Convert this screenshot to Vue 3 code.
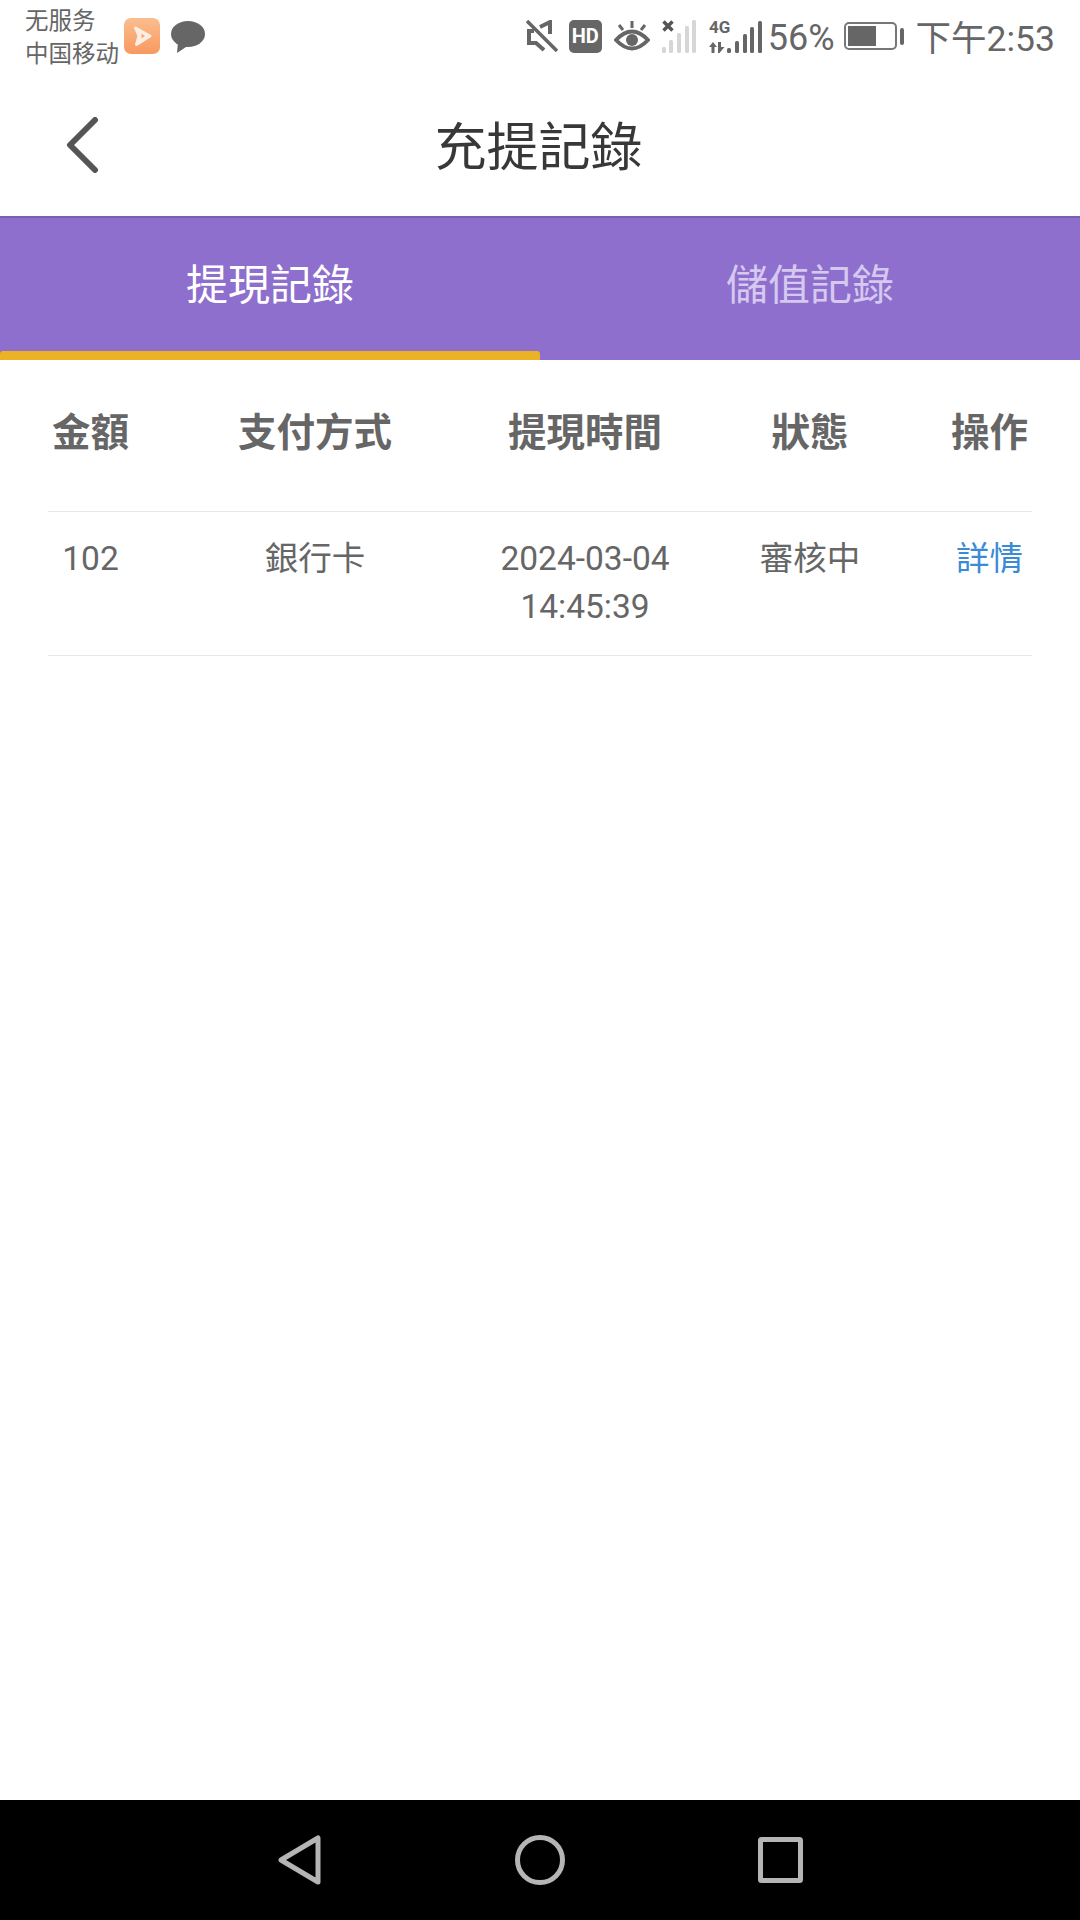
<template>
  <div class="page">
    <div class="status-bar">
      <div class="carrier">
        <span>无服务</span>
        <span>中国移动</span>
      </div>
      <svg class="app-icon" width="36" height="36" viewBox="0 0 36 36">
        <defs>
          <linearGradient id="appGrad" x1="0" y1="0" x2="0" y2="1">
            <stop offset="0" stop-color="#fbbd8e" />
            <stop offset="1" stop-color="#f8995f" />
          </linearGradient>
        </defs>
        <rect width="36" height="36" rx="7" fill="url(#appGrad)" />
        <path d="M11.5 10 L26 18 L12.5 26.5 L15 18 Z" fill="#fdeee3" stroke="#fdeee3" stroke-width="3" stroke-linejoin="round" />
        <path d="M17.5 15.5 L21 18 L17.5 20.5 Z" fill="#f9a873" />
      </svg>
      <svg class="bubble" width="34" height="32" viewBox="0 0 34 32">
        <ellipse cx="17" cy="13" rx="17" ry="13" fill="#666" />
        <path d="M7 21 L6 32 L18 24 Z" fill="#666" />
      </svg>

      <div class="status-right">
        <svg width="32" height="32" viewBox="0 0 32 32" fill="none" stroke="#666" stroke-width="4">
          <path d="M1 1 L31 31" stroke-width="3.5" />
          <path d="M8 11 H3 V23 H10 L18 30 M14 7 L24 2 V14" />
        </svg>
        <div class="hd">HD</div>
        <svg width="36" height="30" viewBox="0 0 36 30" fill="none" stroke="#666">
          <path d="M2 19 Q18 2 34 19 Q18 36 2 19 Z" stroke-width="4" />
          <circle cx="18" cy="19" r="6" fill="#666" stroke="none" />
          <path d="M18 0 V7 M5 4 L9 9 M31 4 L27 9" stroke-width="3" />
        </svg>
        <svg width="35" height="33" viewBox="0 0 35 33">
          <path d="M1.5 1.5 L10.5 10.5 M10.5 1.5 L1.5 10.5" stroke="#555" stroke-width="3.5" />
          <g fill="#d6d6d6">
            <rect x="0" y="27" width="4" height="6" rx="1.5" />
            <rect x="7" y="20" width="4" height="13" rx="1.5" />
            <rect x="15" y="13" width="4" height="20" rx="1.5" />
            <rect x="23" y="6" width="4" height="27" rx="1.5" />
            <rect x="30" y="0" width="4" height="33" rx="1.5" />
          </g>
        </svg>
        <svg width="53" height="33" viewBox="0 0 53 33" fill="#666">
          <text x="0" y="13" class="net-label">4G</text>
          <path d="M0 27 L4 22 L8 27 H5.5 V33 H2.5 V27 Z M9 22 H12 V27 H15.5 L10.5 33 H9 Z" />
          <rect x="18" y="28" width="4" height="5" rx="1.5" />
          <rect x="26" y="21" width="4" height="12" rx="1.5" />
          <rect x="34" y="14" width="4" height="19" rx="1.5" />
          <rect x="41" y="7" width="4" height="26" rx="1.5" />
          <rect x="49" y="1" width="4" height="32" rx="1.5" />
        </svg>
        <span class="percent">56%</span>
        <div class="battery">
          <div class="battery-body"><div class="battery-fill"></div></div>
          <div class="battery-tip"></div>
        </div>
        <span class="time">下午2:53</span>
      </div>
    </div>

    <div class="nav-bar">
      <svg class="back" width="34" height="56" viewBox="0 0 34 56" fill="none">
        <path d="M30 3 L5 28 L30 53" stroke="#555" stroke-width="6" stroke-linecap="round" stroke-linejoin="round" />
      </svg>
      <h1 class="title">充提記錄</h1>
    </div>

    <div class="tabs">
      <div
        v-for="(tab, i) in tabs"
        :key="tab"
        class="tab"
        :class="{ active: i === activeTab }"
        @click="activeTab = i"
      >
        {{ tab }}
      </div>
    </div>

    <div class="table">
      <div class="row head">
        <div v-for="col in columns" :key="col">{{ col }}</div>
      </div>
      <div v-for="item in records" :key="item.time" class="row body">
        <div>{{ item.amount }}</div>
        <div>{{ item.method }}</div>
        <div>{{ item.date }}<br />{{ item.time }}</div>
        <div>{{ item.status }}</div>
        <div class="link">詳情</div>
      </div>
    </div>

    <div class="sys-nav">
      <svg width="43" height="50" viewBox="0 0 43 50" fill="none" stroke="#b5b5b5" stroke-width="5" stroke-linejoin="round">
        <path d="M40 3 V47 L3 25 Z" />
      </svg>
      <svg width="50" height="50" viewBox="0 0 50 50" fill="none" stroke="#b5b5b5" stroke-width="5">
        <circle cx="25" cy="25" r="22.5" />
      </svg>
      <svg width="45" height="46" viewBox="0 0 45 46" fill="none" stroke="#b5b5b5" stroke-width="5" stroke-linejoin="round">
        <rect x="2.5" y="2.5" width="40" height="41" rx="1" />
      </svg>
    </div>
  </div>
</template>

<script setup>
import { ref } from 'vue'

const activeTab = ref(0)
const tabs = ['提現記錄', '儲值記錄']
const columns = ['金額', '支付方式', '提現時間', '狀態', '操作']
const records = [
  { amount: '102', method: '銀行卡', date: '2024-03-04', time: '14:45:39', status: '審核中' }
]
</script>

<style>
body {
  margin: 0;
  background: #fff;
}
</style>

<style scoped>
.page {
  width: 1080px;
  height: 1920px;
  display: flex;
  flex-direction: column;
  background: #fff;
  color: #666;
  font-family: Roboto, "Noto Sans CJK TC", sans-serif;
}

.status-bar {
  height: 70px;
  padding: 0 25px;
  display: flex;
  align-items: center;
  box-sizing: border-box;
}

.carrier {
  width: 99px;
  display: flex;
  flex-direction: column;
  font-size: 23.5px;
  line-height: 33px;
  margin-top: 6px;
  white-space: nowrap;
}

.app-icon {
  margin-top: 2px;
}

.bubble {
  margin-left: 11px;
  margin-top: 4px;
}

.status-right {
  margin-left: auto;
  display: flex;
  align-items: center;
  gap: 12px;
  margin-top: 2px;
}

.hd {
  width: 33px;
  height: 33px;
  margin-left: -1px;
  display: flex;
  align-items: center;
  justify-content: center;
  border-radius: 5px;
  background: #666;
  color: #fff;
  font-size: 20px;
  font-weight: 700;
}

.net-label {
  font-family: Roboto, sans-serif;
  font-size: 17px;
  font-weight: 700;
}

.percent {
  font-size: 36px;
  margin-left: -6px;
  margin-top: 3px;
}

.battery {
  display: flex;
  align-items: center;
  gap: 3px;
  margin-left: -3px;
}

.battery-body {
  width: 53px;
  height: 28px;
  border: 2px solid #777;
  border-radius: 5px;
  padding: 2px;
  box-sizing: border-box;
}

.battery-fill {
  width: 28px;
  height: 100%;
  background: #666;
}

.battery-tip {
  width: 4px;
  height: 17px;
  background: #666;
  border-radius: 2px;
}

.time {
  font-size: 35.5px;
  margin-top: -1px;
}

.nav-bar {
  height: 146px;
  position: relative;
  display: flex;
  align-items: center;
  justify-content: center;
}

.back {
  position: absolute;
  left: 65px;
  top: 47px;
}

.title {
  margin: 0;
  padding-right: 3px;
  font-size: 52px;
  font-weight: 400;
  color: #383838;
}

.tabs {
  height: 144px;
  display: flex;
  background: #8e6fcd;
  border-top: 2px solid #7b5fb3;
  box-sizing: border-box;
}

.tab {
  flex: 1;
  position: relative;
  display: flex;
  align-items: center;
  justify-content: center;
  padding-bottom: 15px;
  box-sizing: border-box;
  font-size: 42px;
  color: #d6c9f0;
}

.tab.active {
  color: #fff;
}

.tab.active::after {
  content: "";
  position: absolute;
  left: 0;
  right: 0;
  bottom: 0;
  height: 9px;
  background: #ebb226;
  border-radius: 3px 3px 0 0;
}

.table {
  flex: 1;
  padding: 0 48px;
}

.row {
  display: grid;
  grid-template-columns: 85px 364px 176px 274px 85px;
  text-align: center;
  border-bottom: 1px solid #e8e8e8;
}

.row > div {
  white-space: nowrap;
  display: flex;
  justify-content: center;
  text-align: center;
}

.head {
  height: 152px;
  align-items: center;
  font-size: 38.5px;
  font-weight: 700;
  padding-bottom: 13px;
  box-sizing: border-box;
}

.body {
  padding: 23px 0 24px;
  font-size: 33.5px;
  line-height: 48px;
}

.body > div:nth-child(3) {
  display: block;
}

.link {
  color: #3a8bd6;
}

.sys-nav {
  height: 120px;
  background: #000;
  display: grid;
  grid-template-columns: 278px 43px 194px 50px 193px 45px;
  align-items: center;
  justify-items: start;
}

.sys-nav svg:nth-child(1) {
  grid-column: 2;
}

.sys-nav svg:nth-child(2) {
  grid-column: 4;
}

.sys-nav svg:nth-child(3) {
  grid-column: 6;
}
</style>
